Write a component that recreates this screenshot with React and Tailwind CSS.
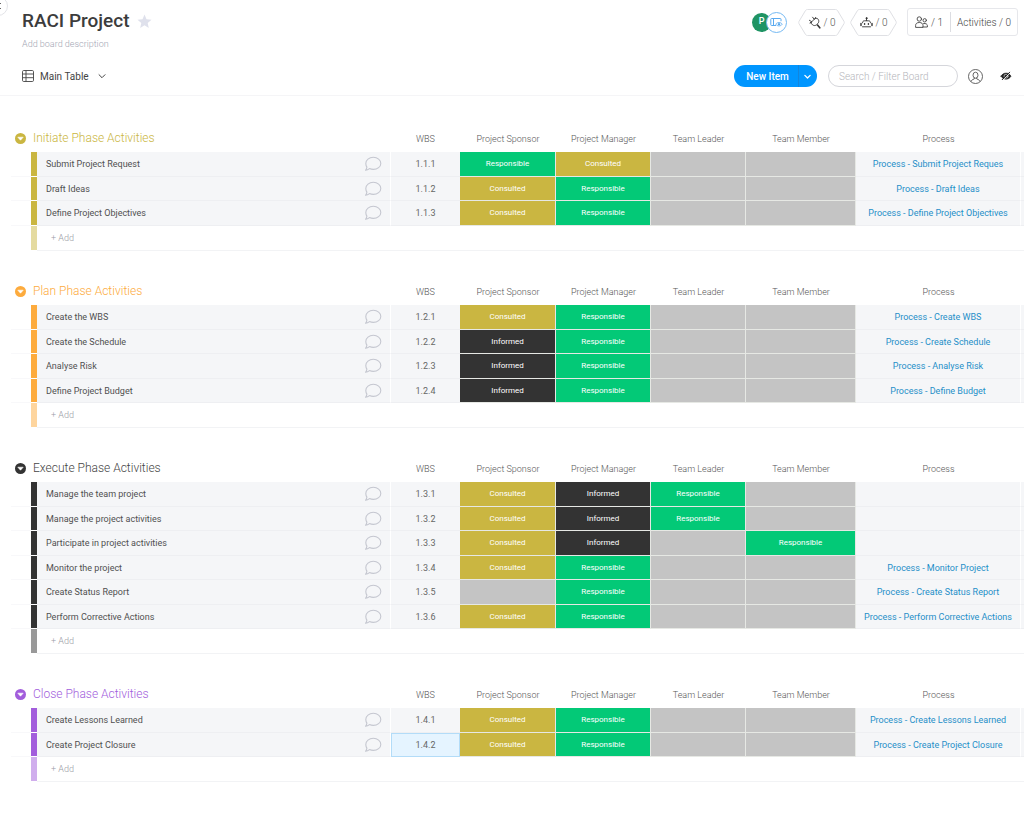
import React, { useState } from 'react'

const STATUS = {
  R: { label: 'Responsible', style: 'bg-[#03c977]' },
  C: { label: 'Consulted', style: 'bg-[#cab641]' },
  I: { label: 'Informed', style: 'bg-[#333333]' },
  '': { label: '', style: 'bg-[#c4c4c4]' }
}

const columns = ['WBS', 'Project Sponsor', 'Project Manager', 'Team Leader', 'Team Member', 'Process']

// roles: sponsor, manager, leader, member
const groups = [
  {
    title: 'Initiate Phase Activities',
    text: 'text-[#cab641]',
    icon: 'text-[#cab641]',
    bar: 'bg-[#cab641]',
    addBar: 'bg-[#e5dba0]',
    items: [
      { name: 'Submit Project Request', wbs: '1.1.1', roles: ['R', 'C', '', ''], process: 'Process - Submit Project Reques' },
      { name: 'Draft Ideas', wbs: '1.1.2', roles: ['C', 'R', '', ''], process: 'Process - Draft Ideas' },
      { name: 'Define Project Objectives', wbs: '1.1.3', roles: ['C', 'R', '', ''], process: 'Process - Define Project Objectives' }
    ]
  },
  {
    title: 'Plan Phase Activities',
    text: 'text-[#fdab3d]',
    icon: 'text-[#fdab3d]',
    bar: 'bg-[#fdab3d]',
    addBar: 'bg-[#fed59e]',
    items: [
      { name: 'Create the WBS', wbs: '1.2.1', roles: ['C', 'R', '', ''], process: 'Process - Create WBS' },
      { name: 'Create the Schedule', wbs: '1.2.2', roles: ['I', 'R', '', ''], process: 'Process - Create Schedule' },
      { name: 'Analyse Risk', wbs: '1.2.3', roles: ['I', 'R', '', ''], process: 'Process - Analyse Risk' },
      { name: 'Define Project Budget', wbs: '1.2.4', roles: ['I', 'R', '', ''], process: 'Process - Define Budget' }
    ]
  },
  {
    title: 'Execute Phase Activities',
    text: 'text-[#444444]',
    icon: 'text-[#333333]',
    bar: 'bg-[#333333]',
    addBar: 'bg-[#999999]',
    items: [
      { name: 'Manage the team project', wbs: '1.3.1', roles: ['C', 'I', 'R', ''], process: '' },
      { name: 'Manage the project activities', wbs: '1.3.2', roles: ['C', 'I', 'R', ''], process: '' },
      { name: 'Participate in project activities', wbs: '1.3.3', roles: ['C', 'I', '', 'R'], process: '' },
      { name: 'Monitor the project', wbs: '1.3.4', roles: ['C', 'R', '', ''], process: 'Process - Monitor Project' },
      { name: 'Create Status Report', wbs: '1.3.5', roles: ['', 'R', '', ''], process: 'Process - Create Status Report' },
      { name: 'Perform Corrective Actions', wbs: '1.3.6', roles: ['C', 'R', '', ''], process: 'Process - Perform Corrective Actions' }
    ]
  },
  {
    title: 'Close Phase Activities',
    text: 'text-[#a25ddc]',
    icon: 'text-[#a25ddc]',
    bar: 'bg-[#a25ddc]',
    addBar: 'bg-[#d0aeed]',
    items: [
      { name: 'Create Lessons Learned', wbs: '1.4.1', roles: ['C', 'R', '', ''], process: 'Process - Create Lessons Learned' },
      { name: 'Create Project Closure', wbs: '1.4.2', roles: ['C', 'R', '', ''], process: 'Process - Create Project Closure' }
    ]
  }
]

const ChatIcon = () => (
  <svg width="18" height="18" viewBox="0 0 18 18" fill="none" stroke="#c5c7d0" strokeWidth="1.1" strokeLinejoin="round">
    <path d="M9.3 2.3c4.2 0 7.5 2.7 7.5 6.1s-3.3 6-7.5 6c-1.4 0-2.7-.3-3.8-.8-1.1.9-2.500 1.600-4 1.700.8-.9 1.300-1.900 1.400-3.200-.7-1-1.100-2.300-1.100-3.700 0-3.400 3.300-6.100 7.500-6.100z" />
  </svg>
)

const ChevronDown = ({ size = 8, width = 1.3 }) => (
  <svg width={size} height={size} viewBox="0 0 8 8" fill="none" stroke="currentColor" strokeWidth={width} strokeLinecap="round" strokeLinejoin="round">
    <path d="M1 2.700l3 3 3-3" />
  </svg>
)

const HexButton = ({ label, children }) => (
  <button aria-label={label} className="relative flex h-[27px] w-[47px] items-center justify-center gap-[3px] text-[10px] font-light text-[#555555]">
    <svg className="absolute inset-0" width="47" height="27" viewBox="0 0 47 27" fill="none" stroke="#dfe0e4">
      <path d="M9.500 .5h28c1 0 1.600.4 2.100 1.200l6.300 10.500c.5.900.5 1.700 0 2.600l-6.300 10.500c-.5.800-1.100 1.200-2.100 1.200h-28c-1 0-1.600-.4-2.100-1.200L1.100 14.800c-.5-.9-.5-1.700 0-2.600L7.400 1.700C7.900.9 8.500.5 9.500.5z" />
    </svg>
    {children}
    <span>/ 0</span>
  </button>
)

const Header = () => {
  const [search, setSearch] = useState('')

  return (
    <header className="border-b border-[#f5f5f7] pt-2 pr-[6px] pb-2 pl-[22px]">
      <div className="flex items-start justify-between">
        <div>
          <div className="flex items-center gap-[7px]">
            <h1 className="text-[19px] leading-[26px] font-medium text-[#3c3c3c]">RACI Project</h1>
            <button aria-label="Add to favorites">
              <svg width="15" height="15" viewBox="0 0 15 15" fill="#dfe1ec">
                <path d="M7.500 .6l2 4.600 5 .5-3.800 3.300 1.100 4.900-4.300-2.600-4.300 2.600 1.100-4.900L.5 5.700l5-.5z" />
              </svg>
            </button>
          </div>
          <p className="mt-1 text-[9px] leading-3 font-light text-[#a3a6b3]">Add board description</p>
        </div>

        <div className="flex items-center">
          <div className="mr-[11px] flex items-center">
            <span className="flex size-[19px] items-center justify-center rounded-full bg-[#1f9464] text-[9px] font-medium text-white">P</span>
            <span className="-ml-[5px] flex size-[21px] items-center justify-center rounded-full border border-[#74b9f3] bg-white">
              <svg width="13" height="11" viewBox="0 0 13 11" fill="none" stroke="#5aaaf0" strokeWidth="1">
                <path d="M6 8.500H1.500a.7.7 0 0 1-.7-.7V2.200a.7.7 0 0 1 .7-.7h8.800a.7.7 0 0 1 .7.7v2M3.500 1.500v7" />
                <path d="M5.700 7.200c1.700-2.300 4.900-2.300 6.600 0-1.700 2.300-4.900 2.300-6.600 0z" fill="#fff" strokeWidth=".8" />
                <circle cx="9" cy="7.200" r=".8" fill="#2f93e8" stroke="#2f93e8" strokeWidth=".6" />
              </svg>
            </span>
          </div>
          <div className="mr-[10px] flex gap-[5px]">
            <HexButton label="Integrations">
              <svg width="13" height="13" viewBox="0 0 13 13" fill="none" stroke="#333" strokeWidth=".9" strokeLinecap="round" strokeLinejoin="round">
                <path d="M3 6.500L7 2.500c1.500-.5 2.700-.1 3.300 1 .7 1.200.6 2.700-.2 3.800L8.300 9c-1.200.8-2.600.7-3.700-.1C3.700 8.200 3.200 7.500 3 6.500z" />
                <path d="M3.700 5.800L1.400 4.300M6.200 3.300L4.600 1.200M2 7l1-.5M7 2.500l.5-1" />
                <path d="M9.500 9l2.300 2.800" strokeWidth="1.600" />
              </svg>
            </HexButton>
            <HexButton label="Automations">
              <svg width="13" height="13" viewBox="0 0 13 13" fill="none" stroke="#333" strokeWidth=".9" strokeLinecap="round">
                <path d="M2.500 6.800c0-1.300.7-2 2-2h4c1.300 0 2 .7 2 2M2.500 10.800h8M6.500 4.500V2.700" />
                <path d="M1 7.500v2M12 7.500v2" strokeWidth="1.400" />
                <path d="M4.600 7.700v.6M8.400 7.700v.6" strokeWidth="1.400" />
                <circle cx="6.500" cy="2.200" r=".6" fill="#333" />
              </svg>
            </HexButton>
          </div>
          <div className="flex h-7 items-center rounded-[3px] border border-[#e6e7eb] text-[10px] font-light text-[#444444]">
            <button aria-label="Members" className="flex w-[42px] items-center justify-center gap-[3px]">
              <svg width="13" height="12" viewBox="0 0 13 12" fill="none" stroke="#444" strokeWidth=".9" strokeLinecap="round">
                <circle cx="4.300" cy="3" r="2.200" />
                <circle cx="9.700" cy="4.300" r="1.700" />
                <path d="M.6 11V9.500c0-1.800 1.300-3 3.700-3s3.700 1.200 3.700 3V11zM8.600 7.500c2.400-.3 3.800.7 3.800 2.200V11H8" />
              </svg>
              <span>/ 1</span>
            </button>
            <span className="h-5 w-px bg-[#dcdde2]" />
            <button className="w-[66px] text-center">Activities / 0</button>
          </div>
        </div>
      </div>

      <div className="mt-[15px] flex items-center justify-between">
        <button className="flex items-center text-[10px] text-[#444444]">
          <svg className="mr-[6px]" width="12" height="12" viewBox="0 0 12 12" fill="none" stroke="#444" strokeWidth=".9">
            <rect x=".5" y=".5" width="11" height="11" rx="1.200" />
            <path d="M4 .5v11M.5 4h11M.5 7.700h11" />
          </svg>
          Main Table
          <span className="ml-[9px]"><ChevronDown width={1} /></span>
        </button>

        <div className="flex items-center">
          <div className="mr-[11px] flex h-[22px] rounded-full bg-[#0096ff] text-white">
            <button className="w-16 pl-[3px] text-center text-[10px] font-medium">New Item</button>
            <button aria-label="More item options" className="flex w-[19px] items-center justify-center rounded-r-full border-l border-[#1285dd] pr-px">
              <ChevronDown size={7} width={1.5} />
            </button>
          </div>
          <input
            type="search"
            aria-label="Search / Filter Board"
            placeholder="Search / Filter Board"
            value={search}
            onChange={(e) => setSearch(e.target.value)}
            className="mr-[10px] h-[22px] w-[130px] rounded-full border border-[#d5d6db] px-[10px] text-[10px] font-light text-[#555555] outline-none placeholder:text-[#b4b5ba]"
          />
          <button aria-label="Filter by person" className="mr-[17px]">
            <svg width="15" height="15" viewBox="0 0 15 15" fill="none" stroke="#555" strokeWidth=".9">
              <circle cx="7.500" cy="7.500" r="7" />
              <ellipse cx="7.500" cy="6.200" rx="2.500" ry="3" />
              <path d="M2.900 12.600c.4-1.400 1.600-2 3.300-2.600l.2-1.200M12.100 12.600c-.4-1.400-1.600-2-3.300-2.600l-.2-1.200" />
            </svg>
          </button>
          <button aria-label="Hidden columns" className="mr-[6px]">
            <svg width="12" height="12" viewBox="0 0 12 12" fill="none" stroke="#222" strokeLinecap="round">
              <path d="M1 6.200c2.200-4.200 7.800-4.200 10 0-2.200 4-7.800 4-10 0z" fill="#222" strokeWidth=".6" />
              <circle cx="6" cy="6.200" r="2" stroke="#fff" strokeWidth=".6" />
              <path d="M2.800 10.200L10 3" stroke="#fff" strokeWidth=".8" />
              <path d="M2.200 9.700L9.700 2.200" strokeWidth="1" />
            </svg>
          </button>
        </div>
      </div>
    </header>
  )
}

const Group = ({ group, selected, onSelect }) => (
  <table className="mb-[26px] w-full table-fixed border-separate border-spacing-0 text-[9px] leading-3">
    <colgroup>
      <col className="w-5" />
      <col className="w-[6px]" />
      <col />
      <col className="w-[69px]" />
      <col className="w-24" />
      <col className="w-[95px]" />
      <col className="w-[95px]" />
      <col className="w-[110px]" />
      <col className="w-[165px]" />
      <col className="w-[3px]" />
    </colgroup>
    <thead>
      <tr className="h-7">
        <th colSpan={3} className="p-0 pl-1 text-left font-normal">
          <div className="flex items-center gap-[7px]">
            <button aria-label={`Collapse ${group.title}`} className={group.icon}>
              <svg width="11" height="11" viewBox="0 0 11 11">
                <circle cx="5.500" cy="5.500" r="5.500" fill="currentColor" />
                <path d="M2.800 4.200h5.400L5.500 7.200z" fill="#fff" stroke="#fff" strokeWidth=".6" strokeLinejoin="round" />
              </svg>
            </button>
            <h2 className={`text-[12px] leading-4 font-light ${group.text}`}>{group.title}</h2>
          </div>
        </th>
        {columns.map((column) => (
          <th key={column} className="p-0 pt-[2px] text-center font-light text-[#555555]">{column}</th>
        ))}
        <th className="p-0" />
      </tr>
    </thead>
    <tbody>
      {group.items.map((item) => (
        <tr key={item.wbs} className="bg-[#f5f6f8] odd:h-[25px] even:h-6">
          <td className="border-b border-[#f8f8fa] bg-white p-0" />
          <td className={`border-b border-white p-0 ${group.bar}`} />
          <td className="border-r border-b border-r-white border-b-[#eeeff2] p-0 pr-[8px] pl-[9px]">
            <div className="flex items-center justify-between text-[#505050]">
              <span>{item.name}</span>
              <button aria-label={`Updates for ${item.name}`}><ChatIcon /></button>
            </div>
          </td>
          <td
            onClick={() => onSelect(item.wbs)}
            className={
              selected === item.wbs
                ? 'border border-[#b3dcf8] bg-[#e5f4ff] p-0 text-center text-[#666666]'
                : 'border-b border-[#eeeff2] p-0 text-center text-[#666666]'
            }
          >
            {item.wbs}
          </td>
          {item.roles.map((role, index) => (
            <td
              key={index}
              className={`border-r border-b border-[#e6e8e4] p-0 text-center text-[8px] font-normal text-white ${STATUS[role].style}`}
            >
              {STATUS[role].label}
            </td>
          ))}
          <td className="border-r border-b border-r-white border-b-[#eeeff2] p-0 text-center">
            {item.process && <a href="#process" className="whitespace-nowrap text-[#1f8fc8]">{item.process}</a>}
          </td>
          <td className="border-b border-[#eeeff2] p-0" />
        </tr>
      ))}
      <tr className="h-[25px]">
        <td className="p-0" />
        <td className={`border-b border-white p-0 ${group.addBar}`} />
        <td colSpan={8} className="border-b border-[#f2f3f5] p-0 pl-[14px]">
          <input
            aria-label={`Add item to ${group.title}`}
            placeholder="+ Add"
            className="block h-4 w-full font-light text-[#444444] outline-none placeholder:text-[#9a9ca6]"
          />
        </td>
      </tr>
    </tbody>
  </table>
)

const App = () => {
  const [selected, setSelected] = useState('1.4.2')

  return (
    <div className="relative min-h-screen overflow-hidden bg-white font-['Roboto',sans-serif]">
      <button
        aria-label="Collapse sidebar"
        className="absolute -top-1 -left-3 flex size-5 items-center justify-end rounded-full border border-[#e3e4e8] bg-white pr-[5px] text-[#666666]"
      >
        <svg width="5" height="8" viewBox="0 0 5 8" fill="none" stroke="currentColor" strokeWidth="1">
          <path d="M4 1L1 4l3 3" />
        </svg>
      </button>
      <Header />
      <main className="pt-7 pl-[11px]">
        {groups.map((group) => (
          <Group key={group.title} group={group} selected={selected} onSelect={setSelected} />
        ))}
      </main>
    </div>
  )
}

export default App
